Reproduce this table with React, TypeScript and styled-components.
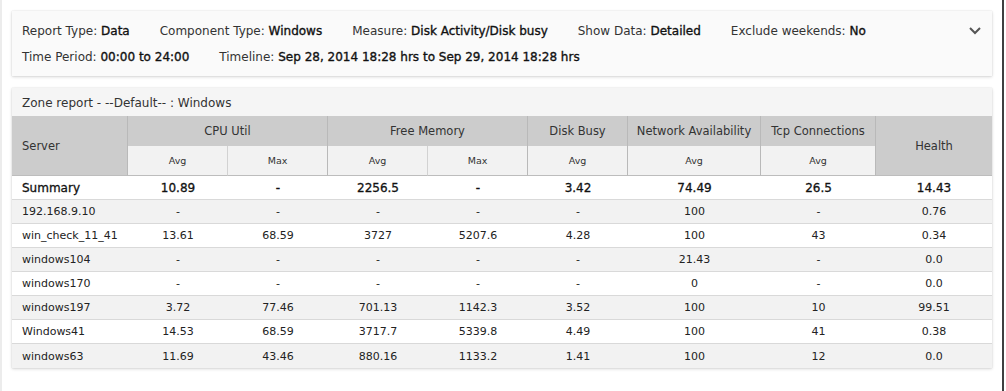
import React from 'react';
import styled, { createGlobalStyle } from 'styled-components';

const GlobalStyle = createGlobalStyle`
  html, body {
    margin: 0;
    padding: 0;
    background: #ffffff;
  }
  body {
    font-family: "DejaVu Sans", Verdana, sans-serif;
    color: #333333;
  }
`;

const Frame = styled.div`
  box-sizing: border-box;
  width: 1004px;
  min-height: 100vh;
  padding: 11px 10px 12px;
  border-left: 2px solid #ececec;
  border-right: 2px solid #3f3f3f;
  display: flex;
  flex-direction: column;
  gap: 12px;
`;

const Panel = styled.section<{ $tint?: string }>`
  background: ${p => p.$tint || '#ffffff'};
  box-shadow: 0 1px 3px rgba(0, 0, 0, 0.16), 0 0 1px rgba(0, 0, 0, 0.14);
`;

const FilterBar = styled(Panel)`
  display: flex;
  align-items: flex-start;
  padding: 7px 12px 6px 10px;
`;

const FilterRows = styled.div`
  flex: 1;
  display: flex;
  flex-direction: column;
`;

const FilterRow = styled.div`
  display: flex;
  column-gap: 30px;
  height: 26px;
  align-items: center;
  font-size: 12px;
  white-space: nowrap;
`;

const Label = styled.span`
  color: #333333;
`;

// semibold look without the extra width of DejaVu Bold
const Value = styled.span`
  color: #111111;
  -webkit-text-stroke: 0.35px #111111;
`;

const Toggle = styled.button`
  height: 26px;
  width: 14px;
  margin-right: -2px;
  padding: 0;
  border: 0;
  background: none;
  display: flex;
  align-items: center;
  justify-content: center;
  cursor: pointer;
`;

const Title = styled.div`
  height: 28px;
  box-sizing: border-box;
  padding: 2px 10px 0;
  display: flex;
  align-items: center;
  font-size: 12px;
  color: #333333;
  background: #f5f5f5;
`;

const Table = styled.table`
  width: 100%;
  table-layout: fixed;
  border-collapse: separate;
  border-spacing: 0;
`;

const GroupHead = styled.th<{ $left?: boolean; $last?: boolean }>`
  box-sizing: border-box;
  height: 30px;
  padding: 0 ${p => (p.$left ? '10px' : '0')};
  background: #cccccc;
  color: #333333;
  font-size: 11.5px;
  font-weight: normal;
  text-align: ${p => (p.$left ? 'left' : 'center')};
  border-right: ${p => (p.$last ? '0' : '1px solid #b9b9b9')};
  &[rowspan] {
    height: 60px;
    border-bottom: 1px solid #bdbdbd;
  }
`;

const SubHead = styled.th<{ $groupEnd?: boolean }>`
  box-sizing: border-box;
  height: 30px;
  padding: 0;
  background: #f2f2f2;
  color: #333333;
  font-size: 9.5px;
  font-weight: normal;
  text-align: center;
  border-right: 1px solid ${p => (p.$groupEnd ? '#b9b9b9' : '#d2d2d2')};
  border-bottom: 1px solid #bdbdbd;
`;

const Row = styled.tr<{ $shade?: boolean; $summary?: boolean }>`
  background: ${p => (p.$shade ? '#f2f2f2' : '#ffffff')};
  td {
    font-size: ${p => (p.$summary ? '12px' : '11px')};
    color: ${p => (p.$summary ? '#111111' : '#222222')};
    -webkit-text-stroke: ${p => (p.$summary ? '0.3px #111111' : '0')};
  }
`;

const Cell = styled.td<{ $left?: boolean }>`
  box-sizing: border-box;
  height: 24px;
  padding: 0 ${p => (p.$left ? '10px' : '0')};
  text-align: ${p => (p.$left ? 'left' : 'center')};
  white-space: nowrap;
  border-bottom: 1px solid #d9d9d9;
  tr:last-child > & {
    border-bottom: 0;
  }
`;

const Chevron: React.FC = () => (
  <svg width="12" height="8" viewBox="0 0 12 8">
    <polyline points="1,1 6,6 11,1" fill="none" stroke="#555555" strokeWidth="2" />
  </svg>
);

const filters: [string, string][][] = [
  [
    ['Report Type:', 'Data'],
    ['Component Type:', 'Windows'],
    ['Measure:', 'Disk Activity/Disk busy'],
    ['Show Data:', 'Detailed'],
    ['Exclude weekends:', 'No'],
  ],
  [
    ['Time Period:', '00:00 to 24:00'],
    ['Timeline:', 'Sep 28, 2014 18:28 hrs to Sep 29, 2014 18:28 hrs'],
  ],
];

const widths = [116, 100, 100, 100, 100, 100, 133, 115, 116];

const summary = ['10.89', '-', '2256.5', '-', '3.42', '74.49', '26.5', '14.43'];

const rows: [string, string[]][] = [
  ['192.168.9.10', ['-', '-', '-', '-', '-', '100', '-', '0.76']],
  ['win_check_11_41', ['13.61', '68.59', '3727', '5207.6', '4.28', '100', '43', '0.34']],
  ['windows104', ['-', '-', '-', '-', '-', '21.43', '-', '0.0']],
  ['windows170', ['-', '-', '-', '-', '-', '0', '-', '0.0']],
  ['windows197', ['3.72', '77.46', '701.13', '1142.3', '3.52', '100', '10', '99.51']],
  ['Windows41', ['14.53', '68.59', '3717.7', '5339.8', '4.49', '100', '41', '0.38']],
  ['windows63', ['11.69', '43.46', '880.16', '1133.2', '1.41', '100', '12', '0.0']],
];

const App: React.FC = () => (
  <>
    <GlobalStyle />
    <Frame>
      <FilterBar $tint='#fafafa'>
        <FilterRows>
          {filters.map((line, i) => (
            <FilterRow key={i}>
              {line.map(([label, value]) => (
                <span key={label}>
                  <Label>{label}</Label> <Value>{value}</Value>
                </span>
              ))}
            </FilterRow>
          ))}
        </FilterRows>
        <Toggle aria-label='Toggle filters'>
          <Chevron />
        </Toggle>
      </FilterBar>

      <Panel>
        <Title>Zone report - --Default-- : Windows</Title>
        <Table>
          <colgroup>
            {widths.map((w, i) => <col key={i} style={{ width: w }} />)}
          </colgroup>
          <thead>
            <tr>
              <GroupHead rowSpan={2} $left>Server</GroupHead>
              <GroupHead colSpan={2}>CPU Util</GroupHead>
              <GroupHead colSpan={2}>Free Memory</GroupHead>
              <GroupHead>Disk Busy</GroupHead>
              <GroupHead>Network Availability</GroupHead>
              <GroupHead>Tcp Connections</GroupHead>
              <GroupHead rowSpan={2} $last>Health</GroupHead>
            </tr>
            <tr>
              <SubHead>Avg</SubHead>
              <SubHead $groupEnd>Max</SubHead>
              <SubHead>Avg</SubHead>
              <SubHead $groupEnd>Max</SubHead>
              <SubHead $groupEnd>Avg</SubHead>
              <SubHead $groupEnd>Avg</SubHead>
              <SubHead $groupEnd>Avg</SubHead>
            </tr>
          </thead>
          <tbody>
            <Row $summary>
              <Cell $left>Summary</Cell>
              {summary.map((v, i) => <Cell key={i}>{v}</Cell>)}
            </Row>
            {rows.map(([name, values], idx) => (
              <Row key={name} $shade={idx % 2 === 0}>
                <Cell $left>{name}</Cell>
                {values.map((v, i) => <Cell key={i}>{v}</Cell>)}
              </Row>
            ))}
          </tbody>
        </Table>
      </Panel>
    </Frame>
  </>
);

export default App;
